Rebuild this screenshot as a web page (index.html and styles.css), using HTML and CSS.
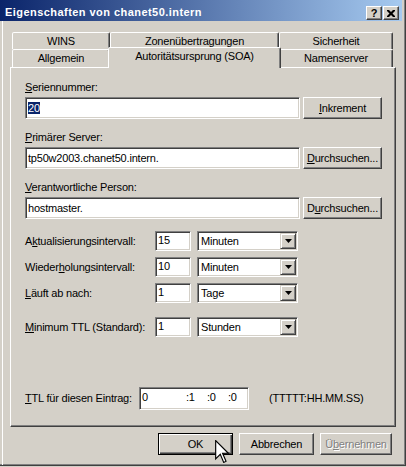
FILE: index.html
```html
<!DOCTYPE html>
<html lang="de">
<head>
<meta charset="utf-8">
<title>Eigenschaften von chanet50.intern</title>
<link rel="stylesheet" href="styles.css">
</head>
<body>
<div class="window">
  <div class="titlebar">
    <span class="title">Eigenschaften von chanet50.intern</span>
    <div class="capbtns">
      <span class="capbtn help">?</span>
      <span class="capbtn close"><svg width="8" height="7" viewBox="0 0 8 7"><path d="M0 0h2l2 2 2-2h2v1L5.5 3.5 8 6v1H6L4 5 2 7H0V6l2.5-2.5L0 1z" fill="#000"/></svg></span>
    </div>
  </div>
  <div class="client">
    <div class="tabs">
      <div class="tabrow back">
        <div class="tab t1">WINS</div>
        <div class="tab t2">Zonenübertragungen</div>
        <div class="tab t3">Sicherheit</div>
      </div>
      <div class="tabrow front">
        <div class="tab t1">Allgemein</div>
        <div class="tab t2 selected">Autoritätsursprung (SOA)</div>
        <div class="tab t3">Namenserver</div>
      </div>
    </div>
    <div class="panel">
      <div class="field">
        <div class="lbl"><u>S</u>eriennummer:</div>
        <div class="fieldrow">
          <div class="edit wide"><span class="seltext">20</span></div>
          <div class="btn side"><span><u>I</u>nkrement</span></div>
        </div>
      </div>
      <div class="field">
        <div class="lbl"><u>P</u>rimärer Server:</div>
        <div class="fieldrow">
          <div class="edit wide">tp50w2003.chanet50.intern.</div>
          <div class="btn side"><span><u>D</u>urchsuchen...</span></div>
        </div>
      </div>
      <div class="field">
        <div class="lbl"><u>V</u>erantwortliche Person:</div>
        <div class="fieldrow">
          <div class="edit wide">hostmaster.</div>
          <div class="btn side"><span>D<u>u</u>rchsuchen...</span></div>
        </div>
      </div>

      <div class="intervals">
        <div class="ilbl">A<u>k</u>tualisierungsintervall:</div>
        <div class="edit num">15</div>
        <div class="combo"><span class="ctext">Minuten</span><span class="ddbtn"><svg width="7" height="4" viewBox="0 0 7 4"><path d="M0 0h7L3.5 4z" fill="#000"/></svg></span></div>

        <div class="ilbl">Wieder<u>h</u>olungsintervall:</div>
        <div class="edit num">10</div>
        <div class="combo"><span class="ctext">Minuten</span><span class="ddbtn"><svg width="7" height="4" viewBox="0 0 7 4"><path d="M0 0h7L3.5 4z" fill="#000"/></svg></span></div>

        <div class="ilbl"><u>L</u>äuft ab nach:</div>
        <div class="edit num">1</div>
        <div class="combo"><span class="ctext">Tage</span><span class="ddbtn"><svg width="7" height="4" viewBox="0 0 7 4"><path d="M0 0h7L3.5 4z" fill="#000"/></svg></span></div>
      </div>

      <div class="intervals minttl">
        <div class="ilbl"><u>M</u>inimum TTL (Standard):</div>
        <div class="edit num">1</div>
        <div class="combo"><span class="ctext">Stunden</span><span class="ddbtn"><svg width="7" height="4" viewBox="0 0 7 4"><path d="M0 0h7L3.5 4z" fill="#000"/></svg></span></div>
      </div>

      <div class="ttlrow">
        <div class="tlbl"><u>T</u>TL für diesen Eintrag:</div>
        <div class="edit ttl">
          <span class="seg d">0</span><span class="seg h">:1</span><span class="seg m">:0</span><span class="seg s">:0</span>
        </div>
        <div class="fmt">(TTTTT:HH.MM.SS)</div>
      </div>
    </div>
    <div class="buttons">
      <div class="btn dlg default"><span>OK</span></div>
      <div class="btn dlg"><span>Abbrechen</span></div>
      <div class="btn dlg apply disabled"><span>Ü<u>b</u>ernehmen</span></div>
    </div>
  </div>
  <svg class="cursor" width="14" height="23" viewBox="0 0 12 20">
    <path d="M0.5 0.5V16.5L4.5 12.5L7.5 19.5L9.5 18.5L6.5 11.5H11.5Z" fill="#fff" stroke="#000" stroke-width="1" stroke-linejoin="miter"/>
  </svg>
</div>
</body>
</html>
```

FILE: styles.css
```css
* { box-sizing: border-box; }
html, body { margin: 0; padding: 0; }
body {
  width: 406px;
  height: 467px;
  overflow: hidden;
  background: #d4d0c8;
  font-family: "Liberation Sans", Arial, sans-serif;
  font-size: 11px;
  letter-spacing: -0.2px;
  color: #000;
}
u { text-decoration: underline; text-underline-offset: 1px; }

.window {
  position: relative;
  width: 406px;
  height: 466px;
  background: #d4d0c8;
  border-right: 1px solid #404040;
  border-bottom: 1px solid #404040;
  box-shadow: inset -1px -1px 0 #808080;
  display: flex;
  flex-direction: column;
}

/* title bar */
.titlebar {
  width: 402px;
  height: 21px;
  flex: none;
  background: linear-gradient(to right, #0a246a, #a6caf0);
  display: flex;
  align-items: flex-start;
  justify-content: space-between;
  padding: 6px 3px 0 5px;
}
.title {
  color: #fff;
  font-weight: bold;
  font-size: 11px;
  line-height: 13px;
  letter-spacing: 0.45px;
}
.capbtns { display: flex; gap: 1px; }
.capbtn {
  width: 16px;
  height: 14px;
  background: #d4d0c8;
  border: 1px solid;
  border-color: #fff #404040 #404040 #fff;
  box-shadow: inset -1px -1px 0 #808080;
  display: flex;
  align-items: center;
  justify-content: center;
  font-weight: bold;
  font-size: 11px;
  line-height: 11px;
  letter-spacing: 0;
}
.capbtn.help { padding-top: 1px; }

/* client */
.client {
  flex: 1;
  margin-left: 2px;
  border-left: 1px solid #fff;
  padding-left: 7px;
  display: flex;
  flex-direction: column;
}

/* tabs */
.tabs { margin-top: 11px; margin-left: 2px; }
.tabrow { display: flex; align-items: flex-start; }
.tabrow.back { height: 17px; }
.tabrow.front { height: 18px; }
.tab {
  background: #d4d0c8;
  border: 1px solid;
  border-bottom: none;
  border-color: #fff #404040 transparent #fff;
  box-shadow: inset -1px 0 0 #808080;
  border-radius: 2px 2px 0 0;
  text-align: center;
  line-height: 13px;
  padding-top: 2px;
}
.back .tab { height: 17px; }
.front .tab { height: 18px; }
.t1 { width: 98px; }
.t2 { width: 169px; }
.t3 { width: 114px; }
.tab.selected {
  position: relative;
  z-index: 2;
  width: 173px;
  margin: -2px -2px 0 -2px;
  height: 21px;
  padding-top: 2px;
}

/* panel */
.panel {
  width: 386px;
  height: 360px;
  flex: none;
  border: 1px solid;
  border-color: #fff #404040 #404040 #fff;
  box-shadow: inset -1px -1px 0 #808080;
  padding: 13px 0 0 14px;
}
.field { margin-bottom: 12px; }
.lbl { line-height: 13px; }
.fieldrow { display: flex; gap: 3px; margin-top: 3px; }

.edit {
  background: #fff;
  border: 1px solid;
  border-color: #808080 #fff #fff #808080;
  box-shadow: inset 1px 1px 0 #404040, inset -1px -1px 0 #d4d0c8;
  padding-left: 2px;
  white-space: nowrap;
  overflow: hidden;
}
.edit.wide { width: 275px; height: 22px; line-height: 20px; }
.seltext { background: #0a246a; color: #fff; }

.btn {
  background: #d4d0c8;
  border: 1px solid;
  border-color: #fff #404040 #404040 #fff;
  box-shadow: inset -1px -1px 0 #808080;
  display: flex;
  align-items: center;
  justify-content: center;
  line-height: 13px;
}
.btn.side { width: 79px; height: 22px; }

/* interval rows */
.intervals {
  display: grid;
  grid-template-columns: 124px 36px 101px;
  grid-auto-rows: 20px;
  column-gap: 6px;
  row-gap: 6px;
  align-items: center;
  margin-top: 2px;
}
.intervals.minttl { margin-top: 14px; }
.ilbl { line-height: 13px; white-space: nowrap; }
.edit.num { height: 20px; line-height: 17px; padding-left: 2px; }
.combo {
  height: 20px;
  background: #fff;
  border: 1px solid;
  border-color: #808080 #fff #fff #808080;
  box-shadow: inset 1px 1px 0 #404040, inset -1px -1px 0 #d4d0c8;
  padding: 1px;
  display: flex;
  align-items: stretch;
}
.ctext { flex: 1; padding-left: 2px; line-height: 16px; }
.ddbtn {
  width: 16px;
  background: #d4d0c8;
  border: 1px solid;
  border-color: #d4d0c8 #404040 #404040 #d4d0c8;
  box-shadow: inset 1px 1px 0 #fff, inset -1px -1px 0 #808080;
  display: flex;
  align-items: center;
  justify-content: center;
}

/* TTL row */
.ttlrow {
  display: flex;
  align-items: center;
  margin-top: 50px;
}
.tlbl { width: 114px; line-height: 13px; white-space: nowrap; }
.edit.ttl {
  width: 110px;
  height: 23px;
  display: flex;
  align-items: center;
  padding-left: 2px;
  padding-bottom: 3px;
}
.seg { line-height: 13px; }
.seg.d { width: 44px; }
.seg.h { width: 21px; }
.seg.m { width: 21px; }
.fmt { margin-left: 20px; line-height: 13px; }

/* dialog buttons */
.buttons {
  display: flex;
  gap: 6px;
  margin-top: 6px;
  padding-left: 148px;
}
.btn.dlg { width: 75px; height: 22px; }
.btn.apply { width: 72px; }
.btn.default {
  border: 1px solid #000;
  box-shadow: inset 1px 1px 0 #fff, inset -1px -1px 0 #404040, inset -2px -2px 0 #808080;
}
.btn.disabled { color: #808080; text-shadow: 1px 1px 0 #fff; }

.cursor {
  position: absolute;
  left: 215px;
  top: 440px;
}
```
